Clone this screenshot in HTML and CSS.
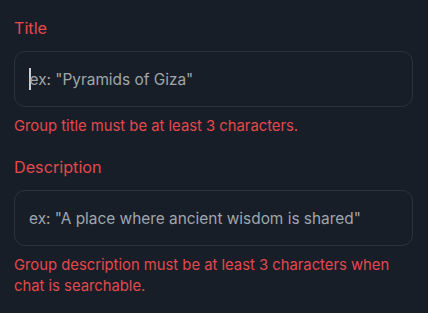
FILE: index.html
```html
<!DOCTYPE html>
<html>
<head>
<meta charset="utf-8">
<link rel="stylesheet" href="styles.css">
</head>
<body>
<div class="form">
  <div class="group">
    <div class="label">Title</div>
    <div class="field"><span class="caret"></span><span class="placeholder">ex: "Pyramids of Giza"</span></div>
    <div class="error">Group title must be at least 3 characters.</div>
  </div>
  <div class="group">
    <div class="label">Description</div>
    <div class="field"><span class="placeholder">ex: "A place where ancient wisdom is shared"</span></div>
    <div class="error">Group description must be at least 3 characters when chat is searchable.</div>
  </div>
</div>
</body>
</html>
```
FILE: styles.css
```css
html, body {
  margin: 0;
  padding: 0;
  background: #171e27;
  height: 100%;
}
body {
  font-family: Inter, "Noto Sans", sans-serif;
}
.form {
  display: flex;
  flex-direction: column;
  gap: 19px;
  padding: 17px 15px 0 14px;
}
.group {
  display: flex;
  flex-direction: column;
}
.label {
  color: #e5484d;
  font-size: 16.2px;
  line-height: 23px;
  margin-bottom: 11px;
}
.field {
  height: 56px;
  box-sizing: border-box;
  border: 1px solid #2b323b;
  border-radius: 11px;
  display: flex;
  align-items: center;
  padding-left: 14px;
  margin-bottom: 9px;
}
.caret {
  width: 1.5px;
  height: 22px;
  background: #c9ced4;
  margin-right: -1px;
}
.placeholder {
  color: #a0a6ad;
  font-size: 15.4px;
}
.error {
  color: #e5484d;
  font-size: 14.8px;
  line-height: 21px;
}
```
